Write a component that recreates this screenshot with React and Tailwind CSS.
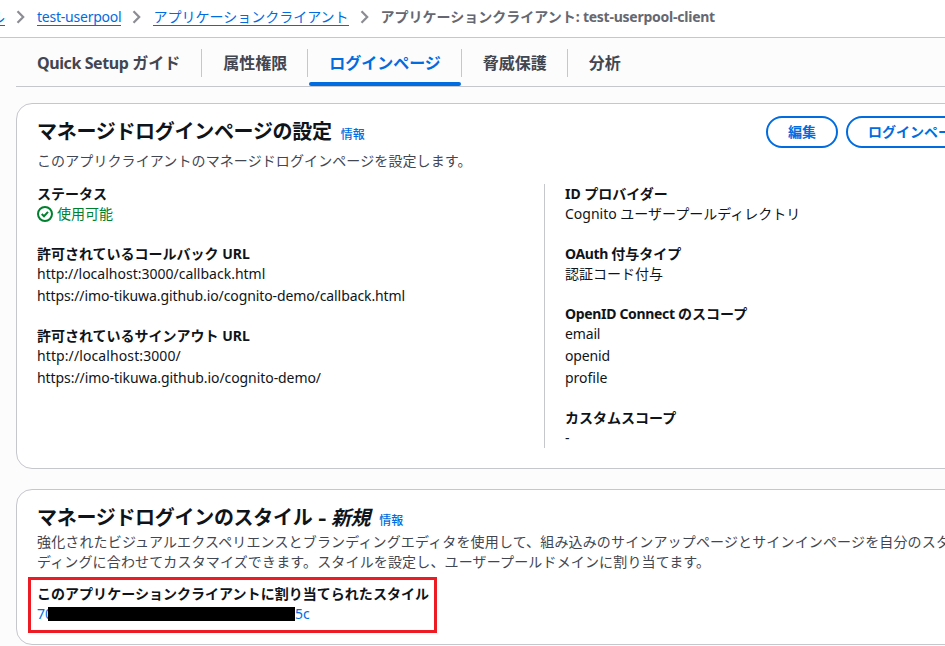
const Chevron = () => (
  <svg className="mx-2 h-4 w-4 shrink-0" viewBox="0 0 16 16" fill="none" stroke="#8c8c94" strokeWidth="2.2">
    <path d="M4.5 2.2 10.2 8l-5.7 5.8" />
  </svg>
);

const Crumb = ({ children }) => (
  <a className="h-[17px] shrink-0 border-b border-[#006ce0] leading-4 text-[#006ce0]">{children}</a>
);

const Tab = ({ children, active, first, last }) => (
  <div className="relative flex h-7 shrink-0 items-center">
    <span className={`pl-[21px] ${first ? "pr-[21px]" : "pr-5"} ${active ? "text-[#006ce0]" : ""}`}>{children}</span>
    {!last && <span className="h-7 w-px bg-[#c6c6cd]" />}
    {active && <span className="absolute right-px -bottom-[9px] left-px h-1 rounded-full bg-[#006ce0]" />}
  </div>
);

const Field = ({ label, children }) => (
  <div>
    <div className="h-5 font-bold">{label}</div>
    <div className="flex flex-col gap-0.5">{children}</div>
  </div>
);

const Info = () => <a className="ml-[9px] text-xs font-medium tracking-normal text-[#006ce0]">情報</a>;

const Button = ({ children }) => (
  <button className="h-8 shrink-0 rounded-full border-2 border-[#006ce0] px-5 text-sm font-bold whitespace-nowrap text-[#006ce0]">
    {children}
  </button>
);

export default function App() {
  return (
    <div className="h-[646px] w-[945px] overflow-hidden bg-[#fcfcfd] font-['Noto_Sans','Noto_Sans_CJK_JP',sans-serif] text-sm leading-5 whitespace-nowrap text-[#0f141a]">
      <nav className="flex h-[38px] items-center border-b border-[#c6c6cd] bg-white pb-[3px]">
        <div className="flex w-[5px] shrink-0 justify-end">
          <Crumb>ル</Crumb>
        </div>
        <Chevron />
        <Crumb>
          <span className="tracking-[-0.23px]">test-userpool</span>
        </Crumb>
        <Chevron />
        <Crumb>アプリケーションクライアント</Crumb>
        <Chevron />
        <span className="font-bold text-[#656871]">
          アプリケーションクライアント<span className="tracking-[-0.24px]">: test-userpool-client</span>
        </span>
      </nav>

      <div className="ml-4 flex h-[49px] border-b border-[#c6c6cd] pt-[11px] text-base font-bold text-[#424650]">
        <Tab first>
          <span className="tracking-[-0.42px]">Quick Setup </span>ガイド
        </Tab>
        <Tab>属性権限</Tab>
        <Tab active>ログインページ</Tab>
        <Tab>脅威保護</Tab>
        <Tab last>分析</Tab>
      </div>

      <section className="mt-4 ml-4 h-[366px] w-[1100px] rounded-2xl border border-[#c6c6cd] bg-white px-5 pt-3">
        <div className="flex h-[68px]">
          <div className="w-[729px] shrink-0">
            <h2 className="pt-0.5 text-xl leading-7 font-bold tracking-[-0.3px]">
              マネージドログインページの設定
              <Info />
            </h2>
            <p className="pt-[5px] tracking-[0.1px] text-[#424650]">
              このアプリクライアントのマネージドログインページを設定します。
            </p>
          </div>
          <div className="flex gap-2">
            <Button>編集</Button>
            <Button>ログインページを表示</Button>
          </div>
        </div>
        <div className="flex h-[264px]">
          <div className="flex w-[507px] flex-col gap-5">
            <Field label="ステータス">
              <span className="flex items-center gap-1 text-[#00802f]">
                <svg className="h-4 w-4" viewBox="0 0 16 16" fill="none" stroke="currentColor" strokeWidth="2">
                  <circle cx="8" cy="8" r="7" />
                  <path d="m4.7 8 2.3 2.2 4-4.4" />
                </svg>
                使用可能
              </span>
            </Field>
            <Field label="許可されているコールバック URL">
              <span>http://localhost:3000/callback.html</span>
              <span className="tracking-[-0.1px]">https://imo-tikuwa.github.io/cognito-demo/callback.html</span>
            </Field>
            <Field label="許可されているサインアウト URL">
              <span className="tracking-[0.1px]">http://localhost:3000/</span>
              <span className="tracking-[-0.07px]">https://imo-tikuwa.github.io/cognito-demo/</span>
            </Field>
          </div>
          <div className="flex flex-col gap-5 border-l border-[#c6c6cd] pl-5">
            <Field label="ID プロバイダー">
              <span>Cognito ユーザープールディレクトリ</span>
            </Field>
            <Field
              label={
                <>
                  <span className="tracking-[-0.35px]">OAuth </span>付与タイプ
                </>
              }
            >
              <span>認証コード付与</span>
            </Field>
            <Field
              label={
                <>
                  <span className="tracking-[-0.33px]">OpenID Connect </span>のスコープ
                </>
              }
            >
              <span className="tracking-[-0.15px]">email</span>
              <span className="tracking-[-0.15px]">openid</span>
              <span>profile</span>
            </Field>
            <Field label="カスタムスコープ">
              <span>-</span>
            </Field>
          </div>
        </div>
      </section>

      <section className="mt-5 ml-4 h-[156px] w-[1100px] rounded-2xl border border-[#c6c6cd] bg-white px-5 pt-3">
        <h2 className="pt-0.5 text-xl leading-7 font-bold tracking-[-0.3px]">
          マネージドログインのスタイル <span className="mx-[1.3px] inline-block scale-x-125">-</span> <em>新規</em>
          <Info />
        </h2>
        <p className="tracking-[0.15px] text-[#424650]">
          強化されたビジュアルエクスペリエンスとブランディングエディタを使用して、組み込みのサインアップページとサインインページを自分のスタイル
          <br />
          ディングに合わせてカスタマイズできます。スタイルを設定し、ユーザープールドメインに割り当てます。
        </p>
        <div className="mt-[5px] -ml-[9px] h-14 w-[409px] border-3 border-[#ed1c24] pt-1 pl-1.5">
          <div className="font-bold tracking-[0.03px]">このアプリケーションクライアントに割り当てられたスタイル</div>
          <div className="flex items-center text-[#006ce0]">
            <span className="w-[11px] overflow-hidden">70</span>
            <span className="h-3.5 w-[247px] bg-black" />
            <span>5c</span>
          </div>
        </div>
      </section>
    </div>
  );
}
